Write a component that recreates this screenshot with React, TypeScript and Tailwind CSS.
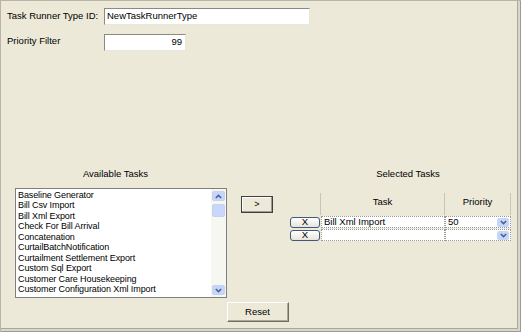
import React from 'react'

const font = { fontFamily: '"Liberation Sans", Arial, sans-serif' }

const tasks = [
  'Baseline Generator',
  'Bill Csv Import',
  'Bill Xml Export',
  'Check For Bill Arrival',
  'Concatenation',
  'CurtailBatchNotification',
  'Curtailment Settlement Export',
  'Custom Sql Export',
  'Customer Care Housekeeping',
  'Customer Configuration Xml Import',
]

function Chevron({ up = false }: { up?: boolean }) {
  return (
    <svg width="7" height="5" viewBox="0 0 7 5" className={up ? 'rotate-180' : ''}>
      <path d="M0.8 1 L3.5 3.6 L6.2 1" fill="none" stroke="#4d6185" strokeWidth="1.5" />
    </svg>
  )
}

function ScrollArrow({ up = false }: { up?: boolean }) {
  return (
    <div className="flex h-[10px] w-[13px] items-center justify-center rounded-[2px] border border-[#c6d3f0] bg-[#c5d5fb]">
      <Chevron up={up} />
    </div>
  )
}

function XButton() {
  return (
    <button className="flex h-[11px] w-[30px] items-center justify-center rounded-[3px] border border-[#3f5a7a] bg-gradient-to-b from-white to-[#e6e4da] p-0 text-[9.5px] leading-none text-black">
      X
    </button>
  )
}

function GridRow({ task, priority }: { task: string; priority: string }) {
  return (
    <div className="flex h-[12px] items-center">
      <div className="flex w-[32px] justify-start pl-[1px]">
        <XButton />
      </div>
      <div className="flex h-[12px] w-[124px] items-center border border-dotted border-[#9a9a9a] bg-white pl-[2px] text-[9.5px] leading-none">
        {task}
      </div>
      <div className="flex h-[12px] w-[66px] items-center justify-between border border-dotted border-[#9a9a9a] bg-white pl-[2px] pr-[1px] text-[9.5px] leading-none">
        <span>{priority}</span>
        <div className="flex h-[9px] w-[12px] items-center justify-center rounded-[2px] bg-[#c5d5fb]">
          <Chevron />
        </div>
      </div>
    </div>
  )
}

export default function App() {
  return (
    <div
      style={font}
      className="relative h-[332px] w-[521px] overflow-hidden border-l border-t border-[#b8b5a8] bg-[#ece9d8] text-black shadow-[inset_-1px_-1px_0_#9d9a8f,inset_-3px_-3px_0_#d9d6cb,inset_-4px_-4px_0_#aaa79c]"
    >
      {/* Header fields */}
      <div className="pl-[6px] pt-[7px]">
        <div className="flex items-center">
          <span className="w-[97px] text-[9.5px]">Task Runner Type ID:</span>
          <div className="flex h-[17px] w-[206px] items-center border border-[#8c8a80] border-b-[#e8e6de] border-r-[#e8e6de] bg-white pl-[2px] text-[9.5px]">
            NewTaskRunnerType
          </div>
        </div>
        <div className="mt-[9px] flex items-center">
          <span className="-mt-[2px] w-[97px] text-[9.5px]">Priority Filter</span>
          <div className="flex h-[17px] w-[82px] items-center justify-end border border-[#8c8a80] border-b-[#e8e6de] border-r-[#e8e6de] bg-white pr-[3px] text-[9.5px]">
            99
          </div>
        </div>
      </div>

      {/* Task lists */}
      <div className="mt-[117px] flex items-start">
        <div className="ml-[14px] w-[212px]">
          <div className="pr-[11px] text-center text-[9.5px] leading-[12px]">Available Tasks</div>
          <div className="mt-[8px] flex h-[110px] border border-[#7f7f7f] bg-white">
            <ul className="flex-1 pl-[2px] pt-[1px] text-[9px] leading-[10.45px] tracking-[-0.1px]">
              {tasks.map((t) => (
                <li key={t} className="whitespace-nowrap">
                  {t}
                </li>
              ))}
            </ul>
            <div className="flex w-[15px] flex-col items-center justify-between bg-[#f7f7f2] py-[2px]">
              <div className="flex flex-col items-center gap-[3px]">
                <ScrollArrow up />
                <div className="h-[13px] w-[13px] rounded-[2px] border border-[#c6d3f0] bg-[#c8d7fb]" />
              </div>
              <ScrollArrow />
            </div>
          </div>
        </div>

        <button className="ml-[14px] mt-[28px] flex h-[17px] w-[32px] items-center justify-center border border-[#404040] bg-[#ece9d8] p-0 text-[9px] shadow-[inset_-1px_-1px_0_#9d9a8f,inset_1px_1px_0_#ffffff]">
          &gt;
        </button>

        <div className="ml-[16px] w-[224px]">
          <div className="pl-[14px] text-center text-[9.5px] leading-[12px]">Selected Tasks</div>
          <div className="mt-[13px] flex h-[22px] items-center text-[9.5px]">
            <div className="h-full w-[32px] border-r border-[#c8c5b8]" />
            <div className="flex h-full w-[124px] items-center justify-center border-r border-[#c8c5b8] pb-[4px]">
              Task
            </div>
            <div className="flex h-full w-[66px] items-center justify-center border-r border-[#c8c5b8] pb-[4px]">
              Priority
            </div>
          </div>
          <div className="mt-[1px] flex flex-col gap-[1px]">
            <GridRow task="Bill Xml Import" priority="50" />
            <GridRow task="" priority="" />
          </div>
        </div>
      </div>

      {/* Reset */}
      <div className="mt-[4px] flex justify-center pr-[7px]">
        <button className="flex h-[20px] w-[62px] items-center justify-center border border-[#ffffff] border-b-[#716f64] border-r-[#716f64] bg-[#ece9d8] p-0 text-[9.5px] shadow-[inset_-1px_-1px_0_#aca899]">
          Reset
        </button>
      </div>
    </div>
  )
}
